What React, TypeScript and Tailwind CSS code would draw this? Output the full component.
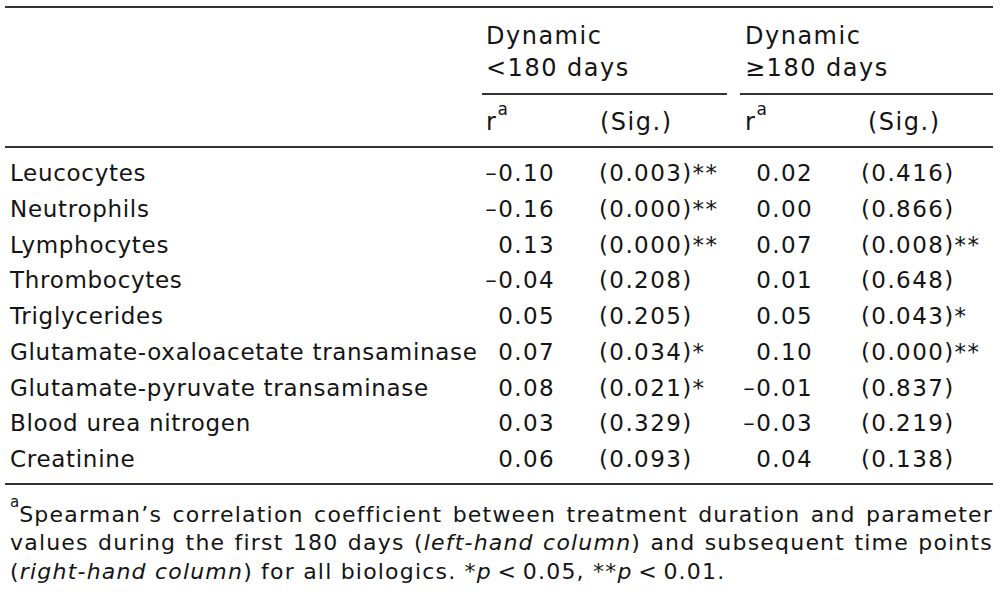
import React from 'react';

const rows = [
  ['Leucocytes', '–0.10', '(0.003)**', '0.02', '(0.416)'],
  ['Neutrophils', '–0.16', '(0.000)**', '0.00', '(0.866)'],
  ['Lymphocytes', '0.13', '(0.000)**', '0.07', '(0.008)**'],
  ['Thrombocytes', '–0.04', '(0.208)', '0.01', '(0.648)'],
  ['Triglycerides', '0.05', '(0.205)', '0.05', '(0.043)*'],
  ['Glutamate-oxaloacetate transaminase', '0.07', '(0.034)*', '0.10', '(0.000)**'],
  ['Glutamate-pyruvate transaminase', '0.08', '(0.021)*', '–0.01', '(0.837)'],
  ['Blood urea nitrogen', '0.03', '(0.329)', '–0.03', '(0.219)'],
  ['Creatinine', '0.06', '(0.093)', '0.04', '(0.138)'],
];

const cols = 'grid grid-cols-[477px_113px_140px_122px_136px]';

export default function App() {
  return (
    <div className="w-[1000px] h-[594px] bg-white text-[#141414] font-['DejaVu_Sans',Verdana,sans-serif] overflow-hidden">
      <div className="ml-[5px] w-[988px] pt-[6px]">
        {/* top rule */}
        <div className="h-[2px] bg-[#333]" />

        {/* header groups */}
        <div className={`${cols} pt-[12px] text-[24px] leading-[32px] tracking-[1.5px]`}>
          <div />
          <div className="col-span-2 pl-[4px]">
            <div>Dynamic</div>
            <div>&lt;180 days</div>
          </div>
          <div className="col-span-2 pl-[10px]">
            <div>Dynamic</div>
            <div>≥180 days</div>
          </div>
        </div>
        <div className={`${cols} pt-[9px]`}>
          <div />
          <div className="col-span-2 mr-[8px] h-[2px] bg-[#333]" />
          <div className="col-span-2 ml-[5px] h-[2px] bg-[#333]" />
        </div>

        {/* sub header */}
        <div className={`${cols} pt-[11px] text-[24px] leading-[32px] tracking-[1.5px]`}>
          <div />
          <div className="pl-[4px]">
            r<sup className="text-[17px] align-[7px] tracking-normal">a</sup>
          </div>
          <div className="pl-[5px]">(Sig.)</div>
          <div className="pl-[10px]">
            r<sup className="text-[17px] align-[7px] tracking-normal">a</sup>
          </div>
          <div className="pl-[11px]">(Sig.)</div>
        </div>
        <div className="mt-[8px] h-[2px] bg-[#333]" />

        {/* body */}
        <div className="pt-[8px] pb-[5px] text-[23px] leading-[35.75px]">
          {rows.map((r, idx) => (
            <div key={idx} className={cols}>
              <div className="pl-[5px] whitespace-nowrap tracking-[0.7px]">{r[0]}</div>
              <div className="text-right pr-[40px] tracking-[1.4px]">{r[1]}</div>
              <div className="pl-[4px] whitespace-nowrap tracking-[1.4px]">{r[2]}</div>
              <div className="text-right pr-[44px] tracking-[1.4px]">{r[3]}</div>
              <div className="pl-[4px] whitespace-nowrap tracking-[1.4px]">{r[4]}</div>
            </div>
          ))}
        </div>
        <div className="h-[2px] bg-[#333]" />

        {/* footnote */}
        <div className="pt-[16px] pl-[5px] text-[22px] leading-[28.5px] tracking-[1.2px]">
          <p className="text-justify [text-align-last:justify]">
            <sup className="text-[15px] align-[7px] tracking-normal">a</sup>Spearman’s correlation
            coefficient between treatment duration and parameter
          </p>
          <p className="text-justify [text-align-last:justify]">
            values during the first 180 days (<i>left-hand column</i>) and subsequent time points
          </p>
          <p>
            (<i>right-hand column</i>) for all biologics. *<i>p</i>
            {'\u2009'}&lt;{'\u2009'}0.05, **<i>p</i>
            {'\u2009'}&lt;{'\u2009'}0.01.
          </p>
        </div>
      </div>
    </div>
  );
}
